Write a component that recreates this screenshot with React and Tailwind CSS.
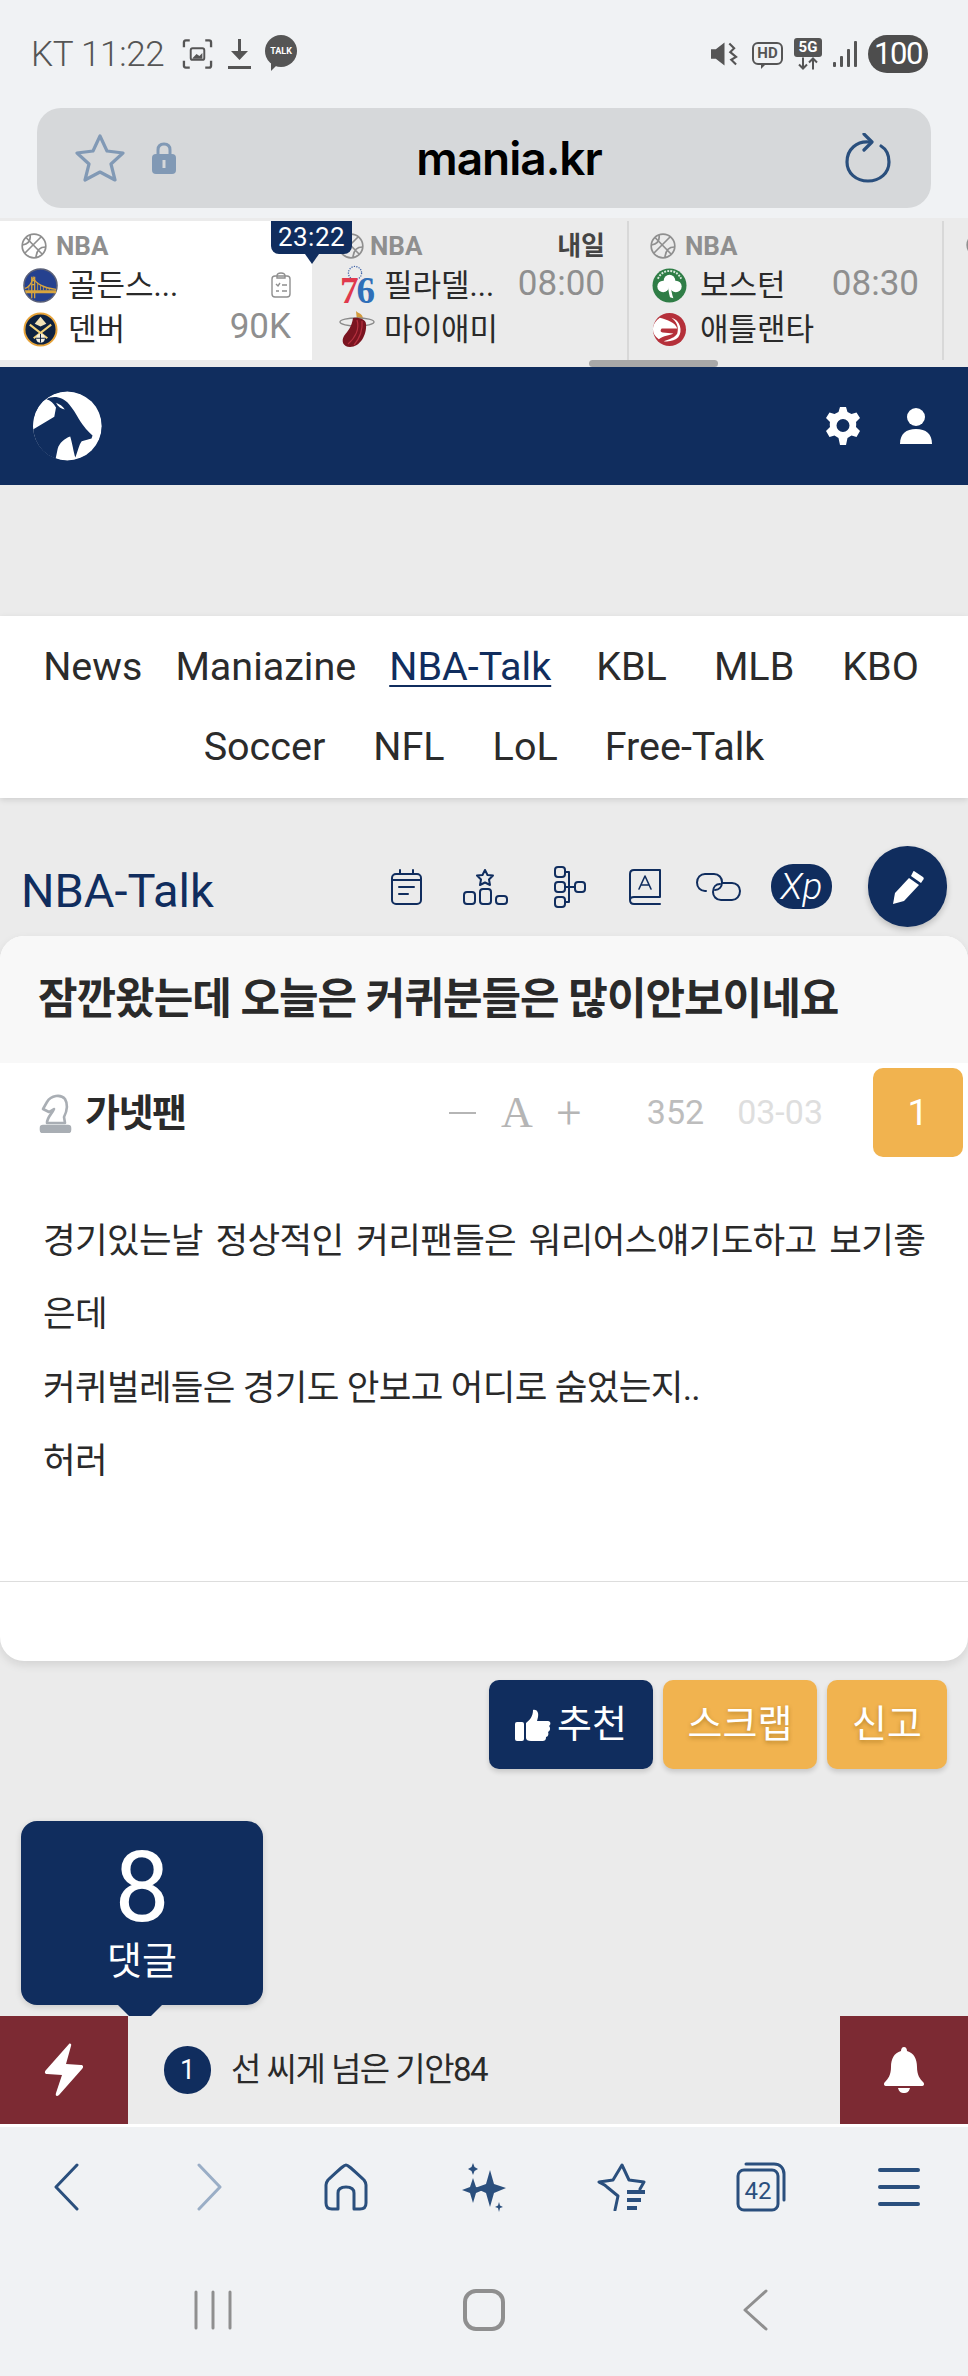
import React from 'react'

const NAVY = '#102d5e'

function Ball({ className = 'w-[26px] h-[26px]' }) {
  return (
    <svg viewBox="0 0 26 26" className={className} fill="none" stroke="#8f8f8f" strokeWidth="1.7">
      <circle cx="13" cy="13" r="11.8" />
      <path d="M5 4.5 L21.5 21.5 M20.5 3.5 L4 20 M9 2 C10 8 7 11 1.5 12 M24.5 14 C19 14 15.5 17 15 24.5" />
    </svg>
  )
}

function Warriors() {
  return (
    <svg viewBox="0 0 36 36" className="w-[35px] h-[35px]">
      <circle cx="18" cy="18" r="17" fill="#25418f" stroke="#5a6078" strokeWidth="1.6" />
      <path d="M9 9 V31 M12 9 V31 M8.500 13 H12.500 M8.500 17 H12.500" stroke="#d9a63e" strokeWidth="1.300" fill="none" />
      <path d="M2 23 H34 V26 H3 Z" fill="#d9a63e" />
      <path d="M2 21 C6 20 9 15 10.500 10 C13 16 22 21 34 22" stroke="#d9a63e" strokeWidth="1.300" fill="none" />
      <path d="M15 15 V23 M18 18 V23 M21 19 V23 M24 20 V23 M27 21 V23 M6 18 V23" stroke="#d9a63e" strokeWidth="0.800" />
    </svg>
  )
}

function Nuggets() {
  return (
    <svg viewBox="0 0 36 36" className="w-[35px] h-[35px]">
      <circle cx="18" cy="18" r="16.5" fill="#0e2240" stroke="#e6a33a" strokeWidth="2" />
      <path d="M18 5 L24 12 L18 15 L12 12 Z" fill="#f2e3b8" />
      <path d="M7 13 L25 27 M29 13 L11 27" stroke="#f2d27a" strokeWidth="2.200" />
      <circle cx="18" cy="27" r="4.6" fill="#f5f0e1" />
      <path d="M18 22.500 V31.500 M13.500 27 H22.500" stroke="#0e2240" strokeWidth="1" />
    </svg>
  )
}

function Sixers() {
  return (
    <div className="relative w-[34px] h-[38px] -mt-[4px]">
      <svg viewBox="0 0 34 18" className="absolute left-[1px] top-0 w-[28px] h-[18px]">
        <circle cx="17" cy="9" r="8" fill="none" stroke="#3c62a8" strokeWidth="1.5" strokeDasharray="1.5 1.5" />
      </svg>
      <div className="absolute left-0 top-[12px] font-['Liberation_Serif',serif] font-bold text-[37px] leading-[30px] tracking-[-2px] flex">
        <span className="text-[#e0394c]">7</span>
        <span className="text-[#2f6fb8]">6</span>
      </div>
    </div>
  )
}

function Heat() {
  return (
    <svg viewBox="0 0 36 36" className="w-[36px] h-[36px]">
      <path d="M17 0 C20 3 23 2 24 7 L18 10 Z" fill="#d39a3c" />
      <ellipse cx="18" cy="11" rx="17" ry="4" fill="none" stroke="#8a8a8a" strokeWidth="1.4" />
      <path d="M14 7 C19 6 27 8 27 13 C28 24 21 36 11 36 C4 36 2 30 5 25 C9 20 13 15 14 7 Z" fill="#7a1420" />
      <path d="M18 9 C21 18 16 27 9 33 M23 10 C24 20 20 28 15 34" stroke="#b5303f" strokeWidth="1.2" fill="none" />
    </svg>
  )
}

function Celtics() {
  return (
    <svg viewBox="0 0 36 36" className="w-[35px] h-[35px]">
      <circle cx="18" cy="18" r="17.500" fill="#2f7d46" />
      <circle cx="11.500" cy="19" r="6" fill="#fff" />
      <circle cx="24.500" cy="19" r="6" fill="#fff" />
      <circle cx="18" cy="13" r="6" fill="#fff" />
      <path d="M16.500 17 H19.500 C19.500 23 20.500 27 22 31 L18.500 30 C17.500 26 16.500 22 16.500 17 Z" fill="#fff" />
      <path d="M6 11 C9 5 14 3 18 3 C22 3 27 5 30 11" fill="none" stroke="#d8e8dc" strokeWidth="2" strokeDasharray="2 1.200" />
    </svg>
  )
}

function Hawks() {
  return (
    <svg viewBox="0 0 36 36" className="w-[35px] h-[35px]">
      <circle cx="18" cy="18" r="17" fill="#b5303a" />
      <path d="M1 18 C1 13 4 9 8 6 C16 8 24 11 26 17 L10 17 C8 19 9 21 11 21 L22 22 C18 24 12 24 7 28 C3 25 1 22 1 18 Z" fill="#fff" />
      <path d="M20 6 C29 8 32 20 27 26 C24 29 18 31 12 30 C18 28 24 26 26 22 C28 15 25 10 20 6 Z" fill="#fff" />
    </svg>
  )
}

function Ticker({ className, logos, names, top, side, sideClass, logoClass, iconGap = 'gap-[9px]' }) {
  return (
    <div className={`h-[139px] shrink-0 relative ${className}`}>
      <div className={`flex items-center h-[28px] mt-[11px] ${iconGap}`}>
        <Ball />
        <span className="text-[26px] font-bold text-[#8f8f8f]">NBA</span>
      </div>
      <div className="flex items-center h-[44px] mt-[3px]">
        <div className={`w-[50px] flex justify-center -ml-[6px] ${logoClass}`}>{logos[0]}</div>
        <span className="text-[31px] leading-none text-[#2a2a2a]">{names[0]}</span>
      </div>
      <div className="flex items-center h-[44px]">
        <div className={`w-[50px] flex justify-center -ml-[6px] ${logoClass}`}>{logos[1]}</div>
        <span className="text-[31px] leading-none text-[#2a2a2a]">{names[1]}</span>
      </div>
      {top}
      <span className={`absolute text-[35px] leading-none text-[#8f8f8f] ${sideClass}`}>{side}</span>
    </div>
  )
}

const navIcon = {
  fill: 'none',
  stroke: NAVY,
  strokeWidth: 2,
  strokeLinecap: 'round',
  strokeLinejoin: 'round',
}

function BoardIcons() {
  return (
    <div className="ml-auto flex items-center">
      <svg viewBox="0 0 31 36" className="w-[31px] h-[36px]" {...navIcon}>
        <rect x="1" y="5" width="29" height="30" rx="4" />
        <path d="M1 11 H30 M9 1 V5 M22 1 V5 M8 18 H23 M8 25 H17" />
      </svg>
      <svg viewBox="0 0 45 36" className="w-[45px] h-[36px] ml-[41px]" {...navIcon}>
        <path d="M22 1 L24.500 6 L30 6.500 L26 10.500 L27 16 L22 13.500 L17 16 L18 10.500 L14 6.500 L19.500 6 Z" />
        <rect x="1" y="23" width="11" height="12" rx="3" />
        <rect x="17" y="20" width="11" height="15" rx="3" />
        <rect x="33" y="27" width="11" height="8" rx="3" />
      </svg>
      <svg viewBox="0 0 32 42" className="w-[32px] h-[42px] ml-[46px]" {...navIcon}>
        <rect x="1" y="1" width="10" height="10" rx="3" />
        <rect x="1" y="16" width="10" height="10" rx="3" />
        <rect x="1" y="31" width="10" height="10" rx="3" />
        <rect x="21" y="16" width="10" height="10" rx="3" />
        <path d="M11 6 H15 V36 H11 M11 21 H21" />
      </svg>
      <svg viewBox="0 0 32 36" className="w-[32px] h-[36px] ml-[43px]" {...navIcon}>
        <path d="M31 28 V1 H5 C2.500 1 1 2.500 1 5 V31 C1 33.500 2.500 35 5 35 H31 M1 31 C1 29 2.500 28 5 28 H31" />
        <path d="M10 20 L16 7 L22 20 M12 16 H20" strokeWidth="1.6" />
      </svg>
      <svg viewBox="0 0 45 28" className="w-[45px] h-[28px] ml-[35px]" {...navIcon}>
        <path d="M10 18 H9 C4.500 18 1 14.500 1 9.500 C1 4.500 4.500 1 9 1 H18 C23 1 26 5 26 9 C26 14 23 17 19 17" />
        <path d="M26 10 H36 C40.500 10 44 13.500 44 18 C44 23 40.500 27 36 27 H25 C20 27 17 23 17 19 C17 14 20 11 24 11" />
      </svg>
      <span className="w-[61px] h-[45px] ml-[30px] rounded-[22px] bg-[#102d5e] text-white italic font-light text-[37px] leading-[45px] text-center">Xp</span>
      <div className="w-[79px] h-[81px] ml-[36px] rounded-full bg-[#102d5e] shadow-[0_3px_6px_rgba(0,0,0,0.2)] flex items-center justify-center">
        <svg viewBox="0 0 36 36" className="w-[36px] h-[36px]" fill="#fff">
          <path d="M24 2 L33 8 C34 9 34 10 33 11 L31 14 L21 7 L23 3 C23 2 24 2 24 2 Z" />
          <path d="M19 9 L29 16 L14 32 L3 35 L5 24 Z" />
        </svg>
      </div>
    </div>
  )
}

const barIcon = {
  fill: 'none',
  stroke: '#2a4f7d',
  strokeWidth: 3,
  strokeLinecap: 'round',
  strokeLinejoin: 'round',
}

function BrowserNav() {
  return (
    <div className="grid grid-cols-7 h-[60px] items-center justify-items-center">
      <svg viewBox="0 0 26 48" className="w-[26px] h-[48px] -translate-x-[3px]" {...barIcon}><path d="M24 2 L3 24 L24 46" /></svg>
      <svg viewBox="0 0 26 48" className="w-[26px] h-[48px] translate-x-[3px]" {...barIcon} stroke="#9aaec6"><path d="M2 2 L23 24 L2 46" /></svg>
      <svg viewBox="0 0 44 48" className="w-[44px] h-[48px]" {...barIcon}>
        <path d="M22 2 C24 2 26 4 40 17 C41.500 19 42 20 42 22 V40 C42 44 40 46 36 46 H30 V30 C30 26 27 24 22 24 C17 24 14 26 14 30 V46 H8 C4 46 2 44 2 40 V22 C2 20 2.500 19 4 17 C18 4 20 2 22 2 Z" />
      </svg>
      <svg viewBox="0 0 46 50" className="w-[46px] h-[50px]" fill="#2a4f7d">
        <path d="M29 8 L33 22 L45 26 L33 31 L29 45 L25 31 L14 26 L25 22 Z" />
        <path d="M12 16 L15 25 L22 28 L15 31 L12 41 L9 31 L1 28 L9 25 Z" />
        <path d="M12 1 L13.500 5 L17 7 L13.500 9 L12 13 L10.500 9 L7 7 L10.500 5 Z" />
        <path d="M38 40 L39 43.500 L42 45 L39 46 L38 50 L37 46 L34 45 L37 43.500 Z" />
      </svg>
      <svg viewBox="0 0 50 48" className="w-[50px] h-[48px]" {...barIcon}>
        <path d="M18 47 L21 33 L10 24 C7 21 3 20 2 19 L16 17 L25 2 L32 17 L47 19 L43 26" />
        <path d="M30 29 H48 M30 37 H44 M30 45 H40" strokeWidth="4" strokeLinecap="butt" />
      </svg>
      <svg viewBox="0 0 50 50" className="w-[50px] h-[50px]" {...barIcon}>
        <rect x="2" y="8" width="40" height="40" rx="6" />
        <path d="M10 2 H38 C44 2 48 6 48 12 V38" />
        <text x="22" y="37" textAnchor="middle" fontSize="24" fontFamily="Roboto, sans-serif" fill="#2a4f7d" stroke="none">42</text>
      </svg>
      <svg viewBox="0 0 42 40" className="w-[42px] h-[40px]" stroke="#2a4f7d" strokeWidth="4" strokeLinecap="round">
        <path d="M2 3 H40 M2 20 H40 M2 37 H40" />
      </svg>
    </div>
  )
}

function StatusBar() {
  return (
    <div className="flex items-center h-[108px] pl-[31px] pr-[40px] text-[#555]">
      <span className="text-[35px] font-light leading-none w-[151px] tracking-[-0.3px] whitespace-nowrap">KT 11:22</span>
      <svg viewBox="0 0 32 32" className="w-[31px] h-[32px]" fill="none" stroke="#555" strokeWidth="2.400">
        <path d="M8 2 H4 C2.500 2 2 3 2 4 V9 M24 2 H28 C29.500 2 30 3 30 4 V9 M8 30 H4 C2.500 30 2 29 2 28 V23 M24 30 H28 C29.500 30 30 29 30 28 V23" />
        <rect x="9" y="10" width="14" height="12" rx="2" strokeWidth="2" />
        <path d="M11 20 L15 16 L18 18 L21 15 V21 H11 Z" fill="#555" stroke="none" />
      </svg>
      <svg viewBox="0 0 23 32" className="w-[23px] h-[32px] ml-[15px]" fill="#555">
        <path d="M10 1 H13 V13 H20 L11.500 22 L3 13 H10 Z" />
        <rect x="0" y="28" width="23" height="3" />
      </svg>
      <div className="relative w-[32px] h-[38px] ml-[14px]">
        <div className="w-[32px] h-[32px] rounded-full bg-[#555] text-white text-[9px] font-bold leading-[32px] text-center">TALK</div>
        <div className="absolute left-[6px] top-[28px] w-0 h-0 border-t-[8px] border-t-[#555] border-r-[8px] border-r-transparent" />
      </div>
      <svg viewBox="0 0 28 26" className="w-[27px] h-[26px] ml-auto" fill="#555">
        <path d="M0 8 H5 L14 1 V25 L5 18 H0 Z" />
        <path d="M19 2 L24 7 L20 11 L26 16 L21 19 L26 24" fill="none" stroke="#555" strokeWidth="2.200" />
      </svg>
      <div className="relative w-[31px] h-[26px] ml-[14px] mt-[2px]">
        <div className="w-[31px] h-[23px] border-2 border-[#555] rounded-[6px] text-[15px] font-bold leading-[19px] text-center">HD</div>
        <div className="absolute left-[9px] top-[22px] w-0 h-0 border-t-[5px] border-t-[#555] border-r-[5px] border-r-transparent" />
      </div>
      <div className="w-[28px] h-[32px] ml-[11px] flex flex-col items-center">
        <div className="w-[28px] h-[19px] bg-[#555] text-white rounded-[3px] text-[15px] font-bold leading-[19px] text-center">5G</div>
        <svg viewBox="0 0 22 12" className="w-[22px] h-[13px]" fill="none" stroke="#555" strokeWidth="2">
          <path d="M6 0 V11 M2 7 L6 11 L10 7 M16 12 V1 M12 5 L16 1 L20 5" />
        </svg>
      </div>
      <svg viewBox="0 0 25 26" className="w-[25px] h-[26px] ml-[11px]" fill="#555">
        <rect x="0" y="21" width="3" height="5" rx="1" />
        <rect x="7" y="15" width="3" height="11" rx="1" />
        <rect x="14" y="8" width="3" height="18" rx="1" />
        <rect x="21" y="0" width="3" height="26" rx="1" />
      </svg>
      <span className="w-[60px] h-[38px] ml-[10px] rounded-[19px] bg-[#4d4d4d] text-white text-[31px] leading-[38px] text-center tracking-[-1.5px]">100</span>
    </div>
  )
}

function AddressBar() {
  return (
    <div className="relative mx-[37px] h-[100px] rounded-[24px] bg-[#d6d8da] flex items-center pl-[38px] pr-[40px]">
      <svg viewBox="0 0 50 48" className="w-[50px] h-[48px]" fill="none" stroke="#8199b5" strokeWidth="3.200" strokeLinejoin="round">
        <path d="M25 2 L32 17 L48 19 L36 30 L40 46 L25 38 L10 46 L14 30 L2 19 L18 17 Z" />
      </svg>
      <svg viewBox="0 0 24 32" className="w-[24px] h-[32px] ml-[27px]">
        <path d="M6 14 V8 C6 4 8.500 2 12 2 C15.500 2 18 4 18 8 V14" fill="none" stroke="#8199b5" strokeWidth="3" />
        <rect x="0" y="12" width="24" height="20" rx="4" fill="#8199b5" />
        <rect x="10.500" y="18" width="3" height="8" fill="#d6d8da" />
      </svg>
      <span className="absolute left-[50px] right-0 text-center text-[46px] font-semibold text-black leading-none font-[Inter,sans-serif] tracking-[-1px]">mania.kr</span>
      <svg viewBox="0 0 46 50" className="w-[46px] h-[50px] ml-auto" fill="none" stroke="#2a4f7d" strokeWidth="3.200" strokeLinecap="round" strokeLinejoin="round">
        <path d="M24 9 C12 8 2 16 2 29 C2 40 11 48 23 48 C35 48 44 40 44 29 C44 22 41 16 36 13" />
        <path d="M19 1 L27 9 L19 17" />
      </svg>
    </div>
  )
}

export default function App() {
  return (
    <div className="relative w-[968px] h-[2376px] overflow-hidden flex flex-col bg-[#ebebeb] font-[Roboto,'Noto_Sans_CJK_KR',sans-serif]">
      <div className="h-[218px] bg-[#f0f2f4] shrink-0">
        <StatusBar />
        <AddressBar />
      </div>

      {/* game ticker */}
      <div className="relative h-[149px] shrink-0 pt-[3px] overflow-hidden">
        <div className="flex">
          <Ticker
            className="w-[312px] pl-[21px] bg-white"
            logos={[<Warriors />, <Nuggets />]}
            names={['골든스...', '덴버']}
            logoClass="mr-[3px]"
            side="90K"
            sideClass="right-[21px] top-[88px]"
            top={
              <svg viewBox="0 0 20 26" className="absolute left-[271px] top-[51px] w-[20px] h-[26px]" fill="none" stroke="#8f8f8f" strokeWidth="1.400">
                <rect x="1" y="4" width="18" height="21" rx="3" />
                <path d="M6 4 C6 2 8 1 10 1 C12 1 14 2 14 4 V6 H6 Z M5 12 L7 14 L9 11 M11 13 H16 M5 19 H8 M11 19 H16" />
              </svg>
            }
          />
          <Ticker
            className="w-[317px] pl-[26px] border-r-2 border-[#d8d8d8]"
            logos={[<Sixers />, <Heat />]}
            names={['필라델...', '마이애미']}
            logoClass="mr-[2px]"
            iconGap="gap-[6px]"
            side="08:00"
            sideClass="right-[22px] top-[45px]"
            top={<span className="absolute right-[22px] top-[10px] text-[26px] font-bold text-[#444] leading-[30px]">내일</span>}
          />
          <Ticker
            className="w-[315px] pl-[21px] border-r-2 border-[#d8d8d8]"
            logos={[<Celtics />, <Hawks />]}
            names={['보스턴', '애틀랜타']}
            logoClass="mr-[6px]"
            side="08:30"
            sideClass="right-[23px] top-[45px]"
          />
          <div className="pl-[22px] pt-[11px] shrink-0">
            <Ball />
          </div>
        </div>
        <div className="absolute left-[271px] top-[3px] w-[81px] h-[33px] bg-[#102d5e] rounded-b-[8px] text-white text-[26px] leading-[33px] text-center tracking-[0.5px]">23:22</div>
        <div className="absolute left-[305px] top-[36px] w-0 h-0 border-l-[7px] border-l-transparent border-r-[7px] border-r-transparent border-t-[10px] border-t-[#102d5e]" />
        <div className="absolute left-[589px] top-[142px] w-[129px] h-[7px] rounded-full bg-[#a8a8a8]" />
      </div>

      <div className="h-[118px] shrink-0 bg-[#102d5e] flex items-center pl-[33px] pr-[36px]">
        <div className="w-[69px] h-[70px] rounded-full overflow-hidden">
          <svg viewBox="72 52 204 206" className="w-[69px] h-[70px]">
            <circle cx="173" cy="155" r="102" fill="#fff" />
            <path d="M72 165 L135 128 L140 100 C132 88 125 80 112 76 C130 64 160 68 178 90 C190 105 200 120 208 135 C222 158 236 172 248 183 L245 192 L216 200 C208 210 205 230 197 248 C192 232 188 205 182 186 C165 192 150 205 145 222 L138 256 L50 280 L40 170 Z" fill="#102d5e" />
            <path d="M140 86 C150 90 160 96 166 106 C156 104 146 98 140 86 Z" fill="#fff" />
          </svg>
        </div>
        <svg viewBox="0 0 36 38" className="w-[36px] h-[38px] ml-auto" fill="#fff">
          <path fillRule="evenodd" d="M15 0 H21 L22.500 5 L26.500 7 L31.500 5.500 L35 11 L31 15 C31.300 16.500 31.300 18 31 20 L35 24 L31.500 30 L26.500 28.500 L22.500 31 L21 38 H15 L13.500 31 L9.500 28.500 L4.500 30 L1 24 L5 20 C4.700 18 4.700 16.500 5 15 L1 11 L4.500 5.500 L9.500 7 L13.500 5 Z M18 12 A6.500 6.500 0 1 0 18 25 A6.500 6.500 0 1 0 18 12 Z" />
        </svg>
        <svg viewBox="0 0 32 36" className="w-[32px] h-[36px] ml-[39px]" fill="#fff">
          <circle cx="16" cy="9" r="9" />
          <path d="M0 36 C0 26 6 21 16 21 C26 21 32 26 32 36 Z" />
        </svg>
      </div>

      <div className="h-[131px] shrink-0" />

      <nav className="h-[182px] shrink-0 bg-white shadow-[0_2px_6px_rgba(0,0,0,0.12)] text-[39.5px] text-[#2b2b2b] pt-[11px]">
        <div className="flex justify-center h-[80px] items-center pr-[6px]">
          <span>News</span>
          <span className="ml-[33px]">Maniazine</span>
          <span className="ml-[33px] text-[#102d5e] underline underline-offset-[5px] decoration-2">NBA-Talk</span>
          <span className="ml-[45px]">KBL</span>
          <span className="ml-[47px]">MLB</span>
          <span className="ml-[48px]">KBO</span>
        </div>
        <div className="flex justify-center h-[80px] items-center">
          <span>Soccer</span>
          <span className="ml-[48px]">NFL</span>
          <span className="ml-[48px]">LoL</span>
          <span className="ml-[47px]">Free-Talk</span>
        </div>
      </nav>

      <div className="flex items-center h-[81px] mt-[48px] pl-[21px] pr-[21px] shrink-0">
        <h1 className="text-[47px] font-normal text-[#102d5e] mt-[10px]">NBA-Talk</h1>
        <BoardIcons />
      </div>

      <article className="mt-[9px] shrink-0 h-[725px] rounded-[24px] bg-white shadow-[0_4px_10px_rgba(0,0,0,0.1)] overflow-hidden">
        <div className="h-[127px] bg-[#f8f8f8] flex items-center pl-[38px]">
          <h2 className="text-[43px] font-bold text-[#2a2a2a] tracking-[-1px]">잠깐왔는데 오늘은 커퀴분들은 많이안보이네요</h2>
        </div>
        <div className="flex items-start h-[99px]">
          <svg viewBox="0 0 33 40" className="w-[33px] h-[40px] ml-[39px] mt-[30px]" fill="none" stroke="#a9aeb4" strokeWidth="2.600" strokeLinejoin="round">
            <path d="M8 30 C8 24 13 21 15 16 L10 19 L4 16 L8 9 C12 2 22 1 26 6 C29 11 28 18 25 24 L26 30 Z" />
            <rect x="2" y="33" width="29" height="6" rx="2" fill="#a9aeb4" />
          </svg>
          <span className="ml-[13px] mt-[28px] text-[38px] font-bold text-[#2a2a2a] tracking-[-1.500px] leading-[44px]">가넷팬</span>
          <div className="ml-auto mr-[5px] mt-[5px] flex items-start">
            <div className="flex items-center h-[89px] text-[#b5b5b5]">
              <span className="w-[27px] h-[2px] bg-[#b5b5b5]" />
              <span className="ml-[25px] font-['Liberation_Serif',serif] text-[44px] leading-none">A</span>
              <span className="ml-[22px] text-[44px] font-light leading-none w-[28px] text-center">+</span>
              <span className="ml-[64px] text-[34px] text-[#bdbdbd]">352</span>
              <span className="ml-[33px] text-[34px] text-[#dedede] mr-[50px]">03-03</span>
            </div>
            <div className="w-[90px] h-[89px] rounded-[10px] bg-[#f1b34f] text-white text-[37px] leading-[89px] text-center">1</div>
          </div>
        </div>
        <div className="pt-[43px] pl-[43px] text-[35.5px] leading-[73.4px] text-[#2a2a2a] h-[419px] whitespace-pre tracking-[-0.7px]">
          <div className="[word-spacing:-1.7px]">경기있는날  정상적인  커리팬들은  워리어스얘기도하고  보기좋</div>
          <div>은데</div>
          <div>커퀴벌레들은 경기도 안보고 어디로 숨었는지..</div>
          <div>허러</div>
        </div>
        <div className="h-px bg-[#dddddd]" />
      </article>

      <div className="flex justify-end gap-[10px] pr-[21px] mt-[19px] shrink-0 text-white text-[38px]">
        <div className="w-[164px] h-[89px] rounded-[10px] bg-[#102d5e] shadow-[0_3px_5px_rgba(0,0,0,0.15)] flex items-center justify-center gap-[6px]">
          <svg viewBox="0 0 36 32" className="w-[36px] h-[32px]" fill="#fff">
            <rect x="0" y="13" width="9" height="19" rx="2" />
            <path d="M11 14 C15 11 18 7 18 1 C22 0 24 4 23 8 L22 12 H33 C36 12 36 16 34 17 C36 19 35 22 33 23 C34 25 33 28 31 28 C31 31 30 32 27 32 H16 C13 32 11 31 11 29 Z" />
          </svg>
          <span>추천</span>
        </div>
        <div className="w-[154px] h-[89px] rounded-[10px] bg-[#f1b34f] shadow-[0_3px_5px_rgba(0,0,0,0.15)] flex items-center justify-center [text-shadow:0_2px_4px_rgba(120,80,0,0.45)]">스크랩</div>
        <div className="w-[120px] h-[89px] rounded-[10px] bg-[#f1b34f] shadow-[0_3px_5px_rgba(0,0,0,0.15)] flex items-center justify-center [text-shadow:0_2px_4px_rgba(120,80,0,0.45)]">신고</div>
      </div>

      <div className="relative ml-[21px] mt-[52px] w-[242px] h-[184px] rounded-[16px] bg-[#102d5e] shadow-[0_2px_6px_rgba(0,0,0,0.15)] text-white flex flex-col items-center shrink-0">
        <span className="text-[98px] leading-none mt-[18px]">8</span>
        <span className="text-[38px] leading-none mt-[5px]">댓글</span>
        <div className="absolute left-[97px] top-[184px] w-[44px] h-[11px] bg-[#102d5e] [clip-path:polygon(0_0,100%_0,75%_100%,25%_100%)]" />
      </div>

      <div className="mt-[11px] h-[108px] shrink-0 flex items-stretch bg-[#ebebeb] z-10">
        <div className="w-[128px] bg-[#7c2a33] flex items-center justify-center">
          <svg viewBox="0 0 40 54" className="w-[40px] h-[54px]" fill="#fff">
            <path d="M25 1 C26 0 28 1 27 3 L22 21 L37 22 C39 22 40 24 38 26 L15 52 C13 54 11 53 12 50 L18 32 L3 31 C1 31 0 29 2 27 Z" />
          </svg>
        </div>
        <div className="flex-1 flex items-center pl-[36px]">
          <span className="w-[47px] h-[48px] rounded-full bg-[#102d5e] text-white text-[27px] leading-[48px] text-center">1</span>
          <span className="ml-[20px] text-[33px] text-[#2a2a2a] tracking-[-1.500px]">선 씨게 넘은 기안84</span>
        </div>
        <div className="w-[128px] bg-[#7c2a33] flex items-center justify-center">
          <svg viewBox="0 0 40 46" className="w-[40px] h-[46px]" fill="#fff">
            <path d="M20 0 C22 0 23 2 23 4 C30 6 33 12 33 20 C33 28 36 32 39 35 C41 37 40 39 37 39 H3 C0 39 -1 37 1 35 C4 32 7 28 7 20 C7 12 10 6 17 4 C17 2 18 0 20 0 Z" />
            <path d="M14 41 H26 C25 45 23 46 20 46 C17 46 15 45 14 41 Z" />
          </svg>
        </div>
      </div>

      <div className="flex-1 bg-[#f0f2f4] border-t-[3px] border-white">
        <div className="pt-[30px]">
          <BrowserNav />
        </div>
        <div className="grid grid-cols-3 px-[78px] mt-[72px] items-center justify-items-center">
          <svg viewBox="0 0 38 40" className="w-[38px] h-[40px]" stroke="#8f8f8f" strokeWidth="3" strokeLinecap="round">
            <path d="M2 2 V38 M19 2 V38 M36 2 V38" />
          </svg>
          <div className="w-[42px] h-[42px] rounded-[13px] border-[4px] border-[#8f8f8f]" />
          <svg viewBox="0 0 26 42" className="w-[26px] h-[42px]" fill="none" stroke="#8f8f8f" strokeWidth="3" strokeLinecap="round" strokeLinejoin="round">
            <path d="M24 2 L3 21 L24 40" />
          </svg>
        </div>
      </div>
    </div>
  )
}
